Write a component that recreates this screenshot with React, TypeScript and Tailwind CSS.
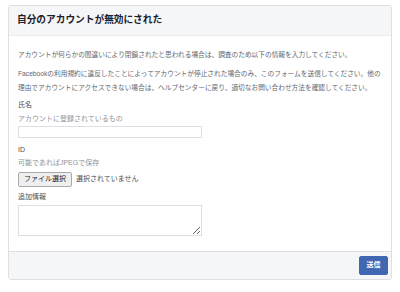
import React from "react";

export default function App() {
  const jp = { fontFamily: "'Liberation Sans', 'Noto Sans CJK JP', sans-serif" };
  return (
    <div className="w-[400px] h-[292px] bg-white pt-[5px] px-[8px]" style={jp}>
      <div className="border border-[#dddfe2] rounded-[3px] bg-white overflow-hidden">
        <div className="h-[30px] bg-[#f5f6f7] border-b border-[#e9ebee] flex items-center px-[8px]">
          <span className="text-[9.7px] font-bold text-[#1d2129]">自分のアカウントが無効にされた</span>
        </div>
        <div className="pl-[9px] pr-[4px] pt-[12px] pb-[15px]">
          <p className="text-[6.7px] leading-[14px] text-[#606770]">
            アカウントが何らかの間違いにより閉鎖されたと思われる場合は、調査のため以下の情報を入力してください。
          </p>
          <p className="mt-[4.5px] text-[6.7px] leading-[14px] text-[#606770]">
            Facebookの利用規約に違反したことによってアカウントが停止された場合のみ、このフォームを送信してください。他の理由でアカウントにアクセスできない場合は、ヘルプセンターに戻り、適切なお問い合わせ方法を確認してください。
          </p>
          <div className="mt-[3px] text-[7px] leading-[13px] text-[#4b4f56]">氏名</div>
          <div className="mt-[1px] text-[7px] leading-[13px] text-[#90949c]">アカウントに登録されているもの</div>
          <div className="mt-[1.5px] w-[184px] h-[12px] border border-[#dddfe2] bg-white"></div>
          <div className="mt-[4.5px] text-[7px] leading-[13px] text-[#4b4f56]">ID</div>
          <div className="text-[7px] leading-[13px] text-[#90949c]">可能であればJPEGで保存</div>
          <div className="mt-[3px] flex items-center h-[15px]">
            <div className="h-[15px] w-[54px] flex items-center justify-center bg-[#efefef] border border-[#a9a9a9] rounded-[2px] text-[7px] text-[#1d2129]">
              ファイル選択
            </div>
            <span className="ml-[4px] text-[7px] text-[#4b4f56]">選択されていません</span>
          </div>
          <div className="mt-[3.5px] text-[7px] leading-[13px] text-[#4b4f56]">追加情報</div>
          <textarea className="mt-[1.5px] block w-[184px] h-[31px] border border-[#dddfe2] bg-white outline-none" />
        </div>
        <div className="h-[28px] bg-[#f5f6f7] border-t border-[#dddfe2] flex items-center justify-end pr-[3px]">
          <div className="w-[29px] h-[19px] bg-[#4267b2] border border-[#4267b2] rounded-[2px] flex items-center justify-center text-[7px] font-bold text-white">
            送信
          </div>
        </div>
      </div>
    </div>
  );
}
